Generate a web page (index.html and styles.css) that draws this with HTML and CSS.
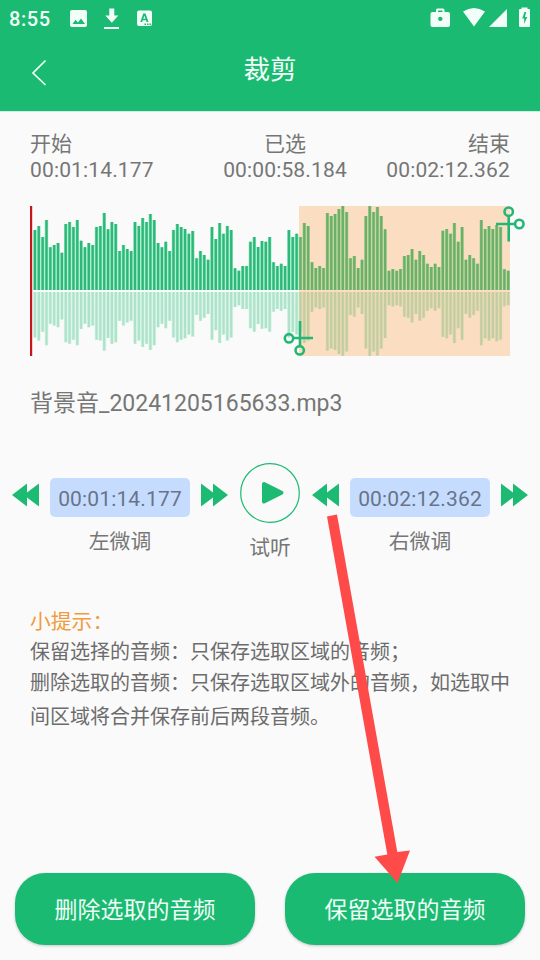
FILE: index.html
```html
<!DOCTYPE html>
<html lang="zh-CN">
<head>
<meta charset="utf-8">
<title>裁剪</title>
<link rel="stylesheet" href="styles.css">
</head>
<body>
<div class="app">
  <header class="header">
    <div class="status">
      <span class="clock">8:55</span>
      <svg class="status-left" width="90" height="24" viewBox="66 7 90 24" fill="#f2fff8">
        <path fill-rule="evenodd" d="M72 10h13q2 0 2 2v13q0 2-2 2h-13q-2 0-2-2v-13q0-2 2-2zM72.500 24h12.500l-4-5.500-3 4-2.500-2.700z"/>
        <path d="M109.300 8.500h5v7h4l-6.500 7.300-6.500-7.300h4zM104 27h15v2h-15z"/>
        <path fill-rule="evenodd" d="M139 10.500h11q2 0 2 2v11.500q0 2-2 2h-11q-2 0-2-2v-11.500q0-2 2-2zM143.300 13.500l-3 8.500h1.900l.6-1.800h3.200l.6 1.800h1.900l-3-8.500zM144.400 15.800l1.100 3h-2.200zM144.500 23.500h1.500v1.500h-1.500zM147 23.500h1.500v1.500h-1.500zM149.500 23.500h1.500v1.500h-1.500z"/>
      </svg>
      <svg class="status-right" width="104" height="24" viewBox="428 5 104 24" fill="#f2fff8">
        <path fill-rule="evenodd" d="M432.500 12h3.500v-2q0-1.500 1.500-1.500h5.500q1.500 0 1.500 1.500v2h3.500q2 0 2 2v11q0 2-2 2h-15.500q-2 0-2-2v-11q0-2 2-2zM438 10.500v1.500h4.500v-1.500zM440.300 16.700a2.200 2.200 0 1 0 .01 0z"/>
        <path d="M463 11.500q11-7 22 0l-11 15zM507 9v18h-18z"/>
        <path fill-rule="evenodd" d="M521.500 7.500h6v1.500h1.500q1 0 1 1v16q0 1-1 1h-9q-1 0-1-1v-16q0-1 1-1h1.500zM524.500 12l-2.300 6.500h2v5.500l3-7h-2.300l1.300-5z"/>
      </svg>
    </div>
    <div class="titlebar">
      <svg class="back" width="18" height="28" viewBox="0 0 18 28"><path d="M15.500 1.500L3 14l12.500 12" fill="none" stroke="#f2fff8" stroke-width="1.700"/></svg>
      <h1>裁剪</h1>
    </div>
  </header>

  <section class="times">
    <div class="time start"><span>开始</span><b>00:01:14.177</b></div>
    <div class="time mid"><span>已选</span><b>00:00:58.184</b></div>
    <div class="time end"><span>结束</span><b>00:02:12.362</b></div>
  </section>

  <svg class="wave" width="500" height="150" viewBox="30 206 500 150">
    <path id="gap" fill="#8be8b9"/>
    <path id="bars" fill="#2fb77b"/>
    <path id="echoGap" fill="#daf6e8"/>
    <path id="echo" fill="#aee2ca"/>
    <rect x="299" y="206" width="211" height="150" fill="#ff9a3c" fill-opacity=".29"/>
    <rect x="30" y="206" width="2.200" height="150" fill="#c4161c"/>
    <g fill="none" stroke="#24b675" stroke-width="2.600">
      <path d="M300 321v24M294 338h19"/><circle cx="289" cy="338.300" r="4.200"/><circle cx="299.700" cy="350.300" r="4.200"/>
      <path d="M508.700 217v24.500M496 224h18"/><circle cx="508.700" cy="211.700" r="4.200"/><circle cx="519.300" cy="224" r="4.200"/>
    </g>
  </svg>

  <p class="filename">背景音_20241205165633.mp3</p>

  <section class="controls">
    <div class="tune">
      <div class="tune-row">
        <svg width="28" height="24" viewBox="0 0 28 24"><path d="M0 12L15 .5V9.500L27 .5v23L15 14.500v9z"/></svg>
        <span class="chip">00:01:14.177</span>
        <svg width="28" height="24" viewBox="0 0 28 24"><path d="M28 12L13 .5V9.500L1 .5v23L13 14.500v9z"/></svg>
      </div>
      <span class="label">左微调</span>
    </div>
    <div class="play">
      <svg width="60" height="60" viewBox="0 0 60 60"><circle cx="30" cy="30" r="29.300" fill="none" stroke="#1cba72" stroke-width="1.200"/><path d="M24 21L41.500 29.700L24 38.500z" stroke="#1cba72" stroke-width="4" stroke-linejoin="round"/></svg>
      <span class="label">试听</span>
    </div>
    <div class="tune">
      <div class="tune-row">
        <svg width="28" height="24" viewBox="0 0 28 24"><path d="M0 12L15 .5V9.500L27 .5v23L15 14.500v9z"/></svg>
        <span class="chip">00:02:12.362</span>
        <svg width="28" height="24" viewBox="0 0 28 24"><path d="M28 12L13 .5V9.500L1 .5v23L13 14.500v9z"/></svg>
      </div>
      <span class="label">右微调</span>
    </div>
  </section>

  <section class="tips">
    <h2>小提示：</h2>
    <p class="keep">保留选择的音频：只保存选取区域的音频；</p>
    <p class="remove">删除选取的音频：只保存选取区域外的音频，如选取中间区域将合并保存前后两段音频。</p>
  </section>

  <footer class="actions">
    <button>删除选取的音频</button>
    <button>保留选取的音频</button>
  </footer>

  <svg class="arrow" width="90" height="372" viewBox="325 512 90 372"><path fill="#ff4a4a" d="M327 516.500L337 514.500L397.300 852L410 850.500L397.500 883L374.500 856.700L387.300 854.500z"/></svg>
</div>
<script src="wave.js"></script>
</body>
</html>
```
FILE: styles.css
```css
* { box-sizing: border-box; margin: 0; padding: 0; }
body { background: #fafafa; font-family: Roboto, "Noto Sans CJK SC", sans-serif; color: #767676; }
.app { position: relative; width: 540px; height: 960px; overflow: hidden; display: flex; flex-direction: column; }
svg { display: block; flex: none; }
.header { height: 112px; flex: none; background: #1bba72; border-bottom: 1px solid #c9efde; color: #f2fff8; }
.status { height: 38px; display: flex; align-items: flex-start; padding: 0 8px 0 9px; }
.clock { width: 57px; font-size: 20px; font-weight: 500; line-height: 24px; margin-top: 7px; letter-spacing: .6px; }
.status-left { margin-top: 7px; }
.status-right { margin: 5px 0 0 auto; }
.titlebar { height: 62px; display: grid; grid-template-columns: 60px 1fr 60px; align-items: center; }
.back { margin: 7px 0 0 30px; }
h1 { font-size: 26.500px; font-weight: 400; text-align: center; line-height: 40px; padding-top: 1px; }
.times { display: flex; justify-content: space-between; height: 94px; flex: none; padding: 19px 30px 0; }
.time { display: flex; flex-direction: column; font-size: 21px; line-height: 26px; }
.time b { font-weight: 400; letter-spacing: .15px; }
.mid { align-items: center; margin-left: 30px; }
.end { align-items: flex-end; }
.wave { margin-left: 30px; }
.filename { margin: 32px 0 0 30px; font-size: 23px; line-height: 32px; }
.controls { height: 107px; margin-top: 43px; flex: none; display: flex; justify-content: space-between; padding: 0 12px; fill: #1cba72; }
.tune { width: 216px; display: flex; flex-direction: column; align-items: center; padding-top: 15px; }
.tune-row { width: 100%; display: flex; justify-content: space-between; align-items: center; height: 39px; }
.tune-row svg { margin-bottom: 6px; }
.chip { width: 140px; height: 39px; border-radius: 5px; background: #c6dcff; color: #68748a; font-size: 21px; line-height: 42px; text-align: center; letter-spacing: .15px; }
.label { font-size: 20.800px; line-height: 28px; }
.tune .label { margin-top: 11px; }
.play { display: flex; flex-direction: column; align-items: center; margin: 0 -4px; }
.play .label { margin-top: 11px; }
.tips { margin: 36px 30px 0; font-size: 20px; color: #6c6c6c; }
h2 { font-size: 20.800px; font-weight: 400; line-height: 32px; color: #f29a3e; }
.keep { line-height: 30px; margin-top: -1px; }
.remove { line-height: 34px; margin-top: -1px; }
.actions { display: flex; gap: 30px; margin: auto 15px 15px; }
.actions button { width: 240px; height: 72px; padding-bottom: 2px; border: 0; border-radius: 30px; background: #1bba72; color: #effff7; font: 23px "Noto Sans CJK SC", sans-serif; box-shadow: 0 1px 3px rgba(0,0,0,.2); }
.arrow { position: absolute; left: 325px; top: 512px; }
```
FILE: wave.js
```js
// Bar heights in thirds of a pixel, measured down from the top of the track.
const tops = [
  90,78,111,60,142,135,129,158,72,66,81,60,122,142,129,135,81,78,39,88,66,72,
  153,135,147,153,66,78,54,66,42,60,129,142,125,153,90,72,81,87,101,93,175,153,
  165,179,81,117,69,101,78,90,205,212,198,198,125,111,141,123,125,111,187,198,
  191,198,90,111,101,111,69,78,187,204,198,204,39,48,42,27,18,36,175,168,204,
  179,48,18,36,21,48,88,212,207,212,207,168,165,147,179,153,165,191,201,191,
  201,92,87,101,69,125,81,179,165,175,191,60,87,78,87,75,81,208,212
];
const base = 290;
const pitch = 3.848;
const d = { gap: '', bars: '', echoGap: '', echo: '' };
const rect = (x, y, w, h) => `M${x.toFixed(2)} ${y.toFixed(2)}h${w}v${h.toFixed(2)}h${-w}z`;
tops.forEach((top, i) => {
  const h = (270 - top) / 3;
  const x = 35 + i * pitch;
  const depth = h * 0.79 - 2;
  d.gap += rect(x - 1.8, base - h, 3.5, h);
  d.bars += rect(x - 1.2, base - h, 2.3, h);
  d.echoGap += rect(x - 1.9, base + 2, 3.8, depth);
  d.echo += rect(x - 1.2, base + 2, 2.3, depth);
});
for (const id in d) document.getElementById(id).setAttribute('d', d[id]);
```
